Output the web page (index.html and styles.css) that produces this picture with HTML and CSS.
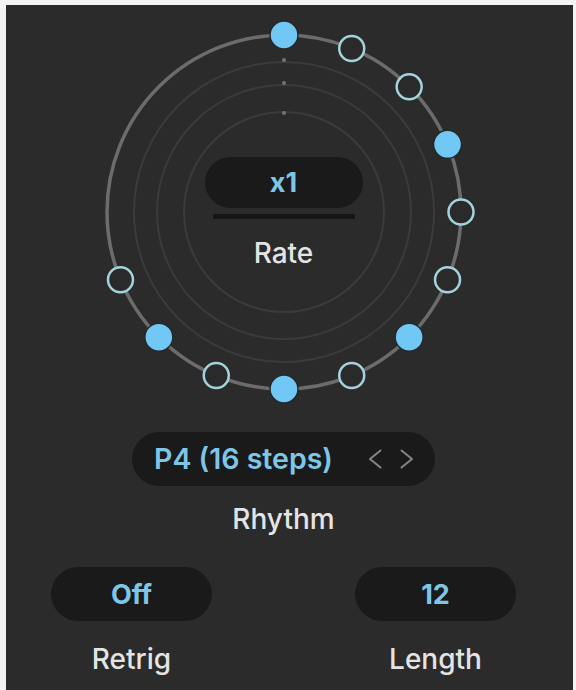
FILE: index.html
```html
<!DOCTYPE html>
<html>
<head>
<meta charset="utf-8">
<link rel="stylesheet" href="styles.css">
</head>
<body>
<div class="panel">
  <div class="content">
    <div class="dial">
      <svg class="dial-svg" width="400" height="400" viewBox="0 0 400 400">
        <circle cx="200" cy="200" r="150" class="inner-ring"/>
        <circle cx="200" cy="200" r="127" class="inner-ring"/>
        <circle cx="200" cy="200" r="100" class="inner-ring"/>
        <circle cx="200" cy="48" r="2" class="tick"/>
        <circle cx="200" cy="71" r="2" class="tick"/>
        <circle cx="200" cy="101" r="2" class="tick"/>
        <circle cx="200" cy="200" r="177" class="outer-ring"/>
        <g id="steps"></g>
      </svg>
      <div class="dial-center">
        <div class="pill rate-pill"><span class="value">x1</span></div>
        <div class="rate-bar"></div>
        <div class="label rate-label">Rate</div>
      </div>
    </div>

    <div class="rhythm">
      <div class="pill rhythm-pill">
        <span class="value rhythm-value">P4 (16 steps)</span>
        <span class="arrows">
          <svg width="14" height="20" viewBox="0 0 14 20"><polyline points="12.5,1.5 2,10 12.5,18.5" class="chev"/></svg>
          <svg width="14" height="20" viewBox="0 0 14 20"><polyline points="1.5,1.5 12,10 1.5,18.5" class="chev"/></svg>
        </span>
      </div>
      <div class="label rhythm-label">Rhythm</div>
    </div>

    <div class="bottom-row">
      <div class="control">
        <div class="pill small-pill"><span class="value">Off</span></div>
        <div class="label">Retrig</div>
      </div>
      <div class="control">
        <div class="pill small-pill"><span class="value">12</span></div>
        <div class="label">Length</div>
      </div>
    </div>
  </div>
</div>
<script>
(function () {
  var g = document.getElementById('steps');
  var filled = [0, 3, 6, 8, 10];
  var ns = 'http://www.w3.org/2000/svg';
  for (var k = 0; k < 12; k++) {
    var a = k * 22.5 * Math.PI / 180;
    var x = 200 + 177 * Math.sin(a);
    var y = 200 - 177 * Math.cos(a);
    var c = document.createElementNS(ns, 'circle');
    c.setAttribute('cx', x.toFixed(2));
    c.setAttribute('cy', y.toFixed(2));
    if (filled.indexOf(k) >= 0) {
      c.setAttribute('r', '14');
      c.setAttribute('class', 'step-on');
    } else {
      c.setAttribute('r', '12.5');
      c.setAttribute('class', 'step-off');
    }
    g.appendChild(c);
  }
})();
</script>
</body>
</html>
```
FILE: styles.css
```css
html, body {
  margin: 0;
  padding: 0;
  background: #f4f4f4;
}
body {
  width: 576px;
  height: 690px;
  overflow: hidden;
  font-family: Inter, "Noto Sans", "Liberation Sans", sans-serif;
}
.panel {
  margin: 5px 3px 0 6px;
  height: 685px;
  background: #2b2b2b;
  padding-top: 7px;
  box-sizing: border-box;
}
.content {
  width: 555px;
  display: flex;
  flex-direction: column;
  align-items: center;
}
.dial {
  display: grid;
  width: 400px;
  height: 400px;
}
.dial-svg {
  grid-area: 1 / 1;
  display: block;
}
.inner-ring {
  fill: none;
  stroke: #3b3b3b;
  stroke-width: 2;
}
.outer-ring {
  fill: none;
  stroke: #6c6c6c;
  stroke-width: 3.5;
}
.tick {
  fill: #747474;
}
.step-on {
  fill: #72c8f5;
  stroke: #23292d;
  stroke-width: 1.5;
}
.step-off {
  fill: #2b2a2a;
  stroke: #a3d3dc;
  stroke-width: 2.5;
}
.dial-center {
  grid-area: 1 / 1;
  display: flex;
  flex-direction: column;
  align-items: center;
  padding-top: 145px;
}
.pill {
  background: #1a1a1a;
  border-radius: 999px;
  display: flex;
  align-items: center;
  justify-content: center;
  box-sizing: border-box;
}
.value {
  color: #7ec6e8;
  font-weight: 700;
  font-size: 27px;
  line-height: 1;
}
.rate-pill {
  width: 158px;
  height: 51px;
}
.rate-bar {
  width: 142px;
  height: 5px;
  margin-top: 6px;
  background: #151515;
  border-radius: 1px;
}
.label {
  color: #e4e4e4;
  font-size: 28px;
  font-weight: 500;
  line-height: 32px;
  text-align: center;
}
.rate-label {
  margin-top: 18px;
}
.rhythm {
  margin-top: 20px;
  display: flex;
  flex-direction: column;
  align-items: center;
}
.rhythm-pill {
  width: 303px;
  height: 54px;
  justify-content: flex-start;
  padding-left: 22px;
}
.rhythm-value {
  font-size: 28.5px;
  font-weight: 600;
}
.arrows {
  display: flex;
  gap: 18px;
  margin-left: auto;
  margin-right: 21px;
}
.arrows svg {
  display: block;
}
.chev {
  fill: none;
  stroke: #858585;
  stroke-width: 2;
  stroke-linecap: round;
  stroke-linejoin: round;
}
.rhythm-label {
  margin-top: 17px;
}
.bottom-row {
  margin-top: 32px;
  display: flex;
  gap: 143px;
}
.control {
  display: flex;
  flex-direction: column;
  align-items: center;
  width: 161px;
}
.small-pill {
  width: 161px;
  height: 54px;
}
.control .label {
  margin-top: 22px;
}
```
